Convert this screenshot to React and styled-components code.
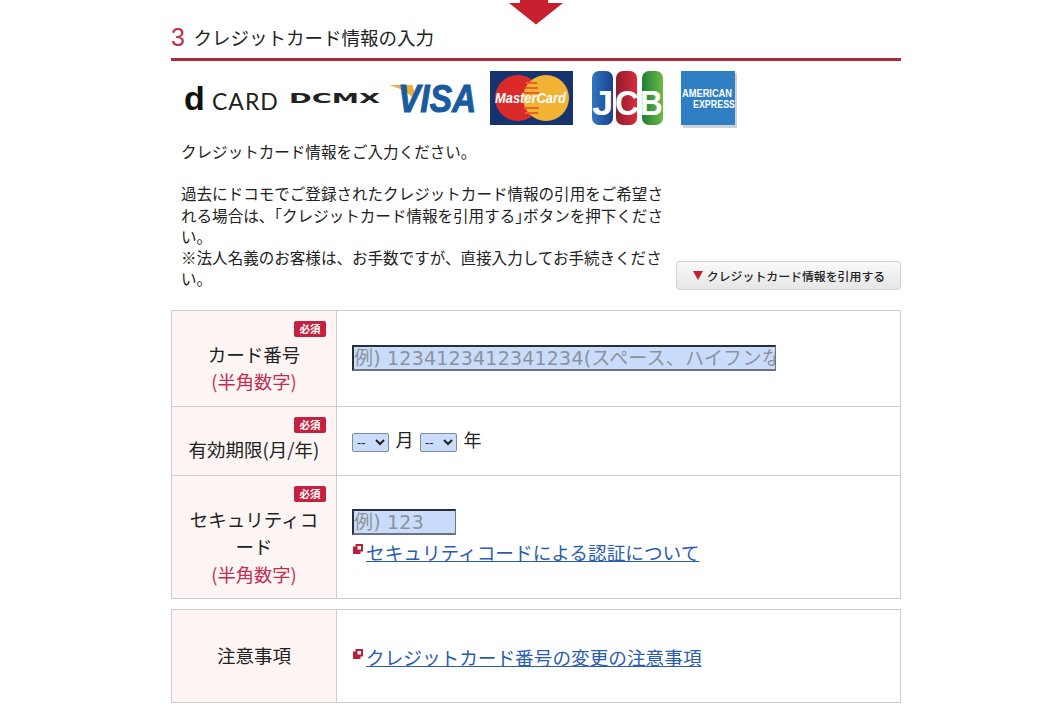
import React from "react";
import styled, { createGlobalStyle } from "styled-components";

const Global = createGlobalStyle`
  html, body { margin: 0; padding: 0; background: #fff; }
  body { font-family: "Noto Sans CJK JP", "Noto Sans", sans-serif; color: #1a1a1a; height: 712px; overflow: hidden; }
`;
const Page = styled.div`
  width: 730px;
  margin-left: 171px;
  display: flex;
  flex-direction: column;
`;
const ArrowBox = styled.div`
  height: 25px;
  display: flex;
  justify-content: center;
`;
const Heading = styled.h2`
  margin: 0;
  height: 36px;
  box-sizing: border-box;
  border-bottom: 3px solid #b22a3e;
  display: flex;
  align-items: center;
  font-size: 18.5px;
  font-weight: 400;
  line-height: 24px;
  padding-bottom: 10px;
  color: #222;
`;
const StepNum = styled.span`
  font-family: "Liberation Sans", sans-serif;
  font-size: 25px;
  color: #b8324a;
  width: 23px;
  margin-right: -0.5px;
`;
const Logos = styled.div`
  display: flex;
  align-items: flex-start;
  height: 57px;
  margin-top: 10px;
  padding-left: 12px;
`;
const Logo = styled.svg`
  display: block;
  flex: none;
  margin-left: ${(p) => p.$gap || 0}px;
`;
const IntroRow = styled.div`
  display: flex;
  align-items: flex-end;
  justify-content: space-between;
  margin-top: 13px;
`;
const Intro = styled.div`
  width: 486px;
  margin-left: 10px;
  font-size: 15.55px;
  line-height: 21.3px;
  color: #222;
`;
const Para = styled.p`
  margin: 0 0 ${(p) => (p.$spaced ? 21 : 0)}px;
`;
const TightBracket = styled.span`
  font-feature-settings: "halt";
`;
const QuoteButton = styled.button`
  width: 225px;
  height: 29px;
  padding: 0 0 0 1px;
  border: 1px solid #d4d4d4;
  border-radius: 3px;
  background: linear-gradient(#f9f9f9, #e6e6e6);
  font-family: inherit;
  font-size: 11.9px;
  font-weight: 500;
  color: #222;
  display: flex;
  align-items: center;
  justify-content: center;
  gap: 4px;
`;
const Triangle = styled.span`
  width: 0;
  height: 0;
  border-left: 5px solid transparent;
  border-right: 5px solid transparent;
  border-top: 9px solid #c22139;
`;
const FormTable = styled.div`
  margin-top: ${(p) => p.$top}px;
  border: 1px solid #cfcccc;
  display: flex;
  flex-direction: column;
`;
const Row = styled.div`
  display: grid;
  grid-template-columns: 165px 1fr;
  height: ${(p) => p.$h}px;
  box-sizing: border-box;
  & + & { border-top: 1px solid #cfcccc; }
`;
const LabelCell = styled.div`
  position: relative;
  background: #fdf5f4;
  border-right: 1px solid #cfcccc;
  display: flex;
  flex-direction: column;
  align-items: center;
  justify-content: center;
  text-align: center;
  font-size: 18.5px;
  line-height: 27.5px;
  padding: ${(p) => p.$pad || "0 8px"};
  color: #222;
`;
const Required = styled.span`
  position: absolute;
  top: 10px;
  right: 10px;
  width: 32px;
  height: 16px;
  border-radius: 2px;
  background: #c5203f;
  color: #fff;
  font-size: 10.5px;
  font-weight: 700;
  line-height: 16px;
  text-align: center;
`;
const Half = styled.span`
  display: block;
  color: #c12f50;
  font-size: 18.3px;
`;
const ValueCell = styled.div`
  padding: 0 15px;
  display: flex;
  flex-direction: column;
  justify-content: center;
  align-items: flex-start;
`;
const TextInput = styled.input`
  box-sizing: border-box;
  width: ${(p) => p.$w}px;
  height: 26px;
  padding: 0;
  border-style: solid;
  border-width: 2px 1px 2px 2px;
  border-color: #27303a #6b7480 #6b7480 #27303a;
  border-radius: 0;
  background: #c9dcfb;
  font-family: "DejaVu Sans", "Noto Sans CJK JP", sans-serif;
  font-size: 19px;
  letter-spacing: 0.2px;
  color: #222;
  outline: none;
  &::placeholder { color: #8d929a; opacity: 1; }
`;
const DateRow = styled.div`
  display: flex;
  align-items: center;
  font-size: 18px;
  color: #222;
  gap: 6.5px;
  margin-top: -3px;
`;
const Select = styled.select`
  width: 37px;
  height: 19px;
  margin-top: 6px;
  box-sizing: border-box;
  border: 1px solid #7d8a9a;
  border-radius: 2px;
  background: #c9dcfb;
  font-family: "Liberation Sans", sans-serif;
  font-size: 13px;
  padding: 0;
  color: #222;
`;
const LinkLine = styled.div`
  display: flex;
  align-items: center;
  height: 27px;
  margin-top: ${(p) => p.$top || 0}px;
`;
const LinkIcon = styled.svg`
  display: block;
  flex: none;
  margin: -4px 3px 0 1px;
`;
const StyledLink = styled.a`
  font-size: 18.65px;
  line-height: 27px;
  color: #2a5db0;
  text-decoration: underline;
`;

const ExtLink = ({ children }) => (
  <>
    <LinkIcon width="10" height="10" viewBox="0 0 10 10">
      <rect x="2.5" y="0" width="7.5" height="7.5" fill="#b71f3a" />
      <rect x="0" y="2.5" width="7.5" height="7.5" fill="#b71f3a" />
      <rect x="4.5" y="2" width="3.5" height="3.5" fill="#fff" />
    </LinkIcon>
    <StyledLink href="#">{children}</StyledLink>
  </>
);

const SANS = "Liberation Sans, sans-serif";

export default function App() {
  return (
    <>
      <Global />
      <Page>
        <ArrowBox>
          <svg width="54" height="25" viewBox="0 0 54 25">
            <path d="M11 0H39V3H54L27 24.5L0 3H11Z" fill="#c8202f" />
          </svg>
        </ArrowBox>
        <Heading>
          <StepNum>3</StepNum>クレジットカード情報の入力
        </Heading>
        <Logos>
          <Logo width="96" height="54" viewBox="0 0 96 54">
            <text x="1" y="39" fontFamily={SANS} fontWeight="700" fontSize="34" fill="#111">d</text>
            <text x="29" y="39" fontFamily="Lato, sans-serif" fontSize="23" letterSpacing="1" fill="#222">CARD</text>
          </Logo>
          <Logo $gap="10" width="92" height="54" viewBox="0 0 92 54">
            <text x="0" y="32" fontFamily="DejaVu Sans, sans-serif" fontWeight="700" fontSize="14" textLength="91" lengthAdjust="spacingAndGlyphs" fill="#222">DCMX</text>
          </Logo>
          <Logo $gap="8" width="88" height="54" viewBox="0 0 88 54">
            <path d="M0 14H23Q25 15 26 30C21 22 11 17 0 14Z" fill="#e9b03e" />
            <text transform="translate(9 41) scale(0.86 1)" fontFamily={SANS} fontWeight="700" fontStyle="italic" fontSize="39" fill="#1a5a9e" stroke="#1a5a9e" strokeWidth="1">VISA</text>
          </Logo>
          <Logo $gap="13" width="83" height="54" viewBox="0 0 83 54">
            <rect width="83" height="54" fill="#15336f" />
            <circle cx="28" cy="27" r="23" fill="#dc2a2a" />
            <circle cx="56" cy="27" r="23" fill="#f2b233" />
            <path d="M36 12H47M35 17H48M34 22H49M34 37H49M35 42H48" stroke="#e8622a" strokeWidth="2" fill="none" />
            <text transform="translate(5 32) scale(0.86 1)" fontFamily={SANS} fontWeight="700" fontStyle="italic" fontSize="15" fill="#fff">MasterCard</text>
          </Logo>
          <Logo $gap="18" width="73" height="54" viewBox="0 0 73 54">
            <defs>
              <linearGradient id="jb" x1="0" x2="1"><stop offset="0" stopColor="#2f78c0" /><stop offset="1" stopColor="#1b3f8e" /></linearGradient>
              <linearGradient id="jr" x1="0" x2="1"><stop offset="0" stopColor="#8d1e2c" /><stop offset="1" stopColor="#d92b3c" /></linearGradient>
              <linearGradient id="jg" x1="0" x2="1"><stop offset="0" stopColor="#1e7f3c" /><stop offset="1" stopColor="#6dbb45" /></linearGradient>
            </defs>
            <rect x="1" width="21" height="54" rx="7" fill="url(#jb)" />
            <rect x="25" width="21" height="54" rx="7" fill="url(#jr)" />
            <rect x="51" width="21" height="54" rx="7" fill="url(#jg)" />
            <text transform="translate(1 44) scale(1.1 1)" fontFamily={SANS} fontWeight="700" fontSize="35" fill="#fff">J</text>
            <text transform="translate(24 44) scale(0.95 1)" fontFamily={SANS} fontWeight="700" fontSize="35" fill="#fff">C</text>
            <text transform="translate(49 44) scale(0.9 1)" fontFamily={SANS} fontWeight="700" fontSize="35" fill="#fff">B</text>
          </Logo>
          <Logo $gap="17" width="56" height="57" viewBox="0 0 56 57">
            <rect x="2" y="2" width="54" height="55" fill="#cfd3d6" />
            <rect width="54" height="54" fill="#2f7fc4" />
            <text transform="translate(1 26) scale(0.93 1)" fontFamily={SANS} fontWeight="700" fontSize="10" fill="#fff">AMERICAN</text>
            <text transform="translate(12 37) scale(0.89 1)" fontFamily={SANS} fontWeight="700" fontSize="10" fill="#fff">EXPRESS</text>
          </Logo>
        </Logos>
        <IntroRow>
          <Intro>
            <Para $spaced>クレジットカード情報をご入力ください。</Para>
            <Para>過去にドコモでご登録されたクレジットカード情報の引用をご希望される場合は、「クレジットカード情報を引用する<TightBracket>」</TightBracket>ボタンを押下ください。</Para>
            <Para>※法人名義のお客様は、お手数ですが、直接入力してお手続きください。</Para>
          </Intro>
          <QuoteButton type="button">
            <Triangle />
            クレジットカード情報を引用する
          </QuoteButton>
        </IntroRow>
        <FormTable $top={20}>
          <Row $h={95}>
            <LabelCell $pad="20px 8px 0">
              <Required>必須</Required>
              カード番号
              <Half>(半角数字)</Half>
            </LabelCell>
            <ValueCell>
              <TextInput $w={424} placeholder="例) 1234123412341234(スペース、ハイフンなし)" />
            </ValueCell>
          </Row>
          <Row $h={69}>
            <LabelCell $pad="17px 8px 0">
              <Required>必須</Required>
              有効期限(月/年)
            </LabelCell>
            <ValueCell>
              <DateRow>
                <Select defaultValue="--"><option>--</option></Select>
                月
                <Select defaultValue="--"><option>--</option></Select>
                年
              </DateRow>
            </ValueCell>
          </Row>
          <Row $h={123}>
            <LabelCell $pad="20px 14px 0">
              <Required>必須</Required>
              セキュリティコード
              <Half>(半角数字)</Half>
            </LabelCell>
            <ValueCell>
              <TextInput $w={104} placeholder="例) 123" />
              <LinkLine $top={3}><ExtLink>セキュリティコードによる認証について</ExtLink></LinkLine>
            </ValueCell>
          </Row>
        </FormTable>
        <FormTable $top={10}>
          <Row $h={92}>
            <LabelCell>注意事項</LabelCell>
            <ValueCell>
              <LinkLine $top={1}><ExtLink>クレジットカード番号の変更の注意事項</ExtLink></LinkLine>
            </ValueCell>
          </Row>
        </FormTable>
      </Page>
    </>
  );
}
